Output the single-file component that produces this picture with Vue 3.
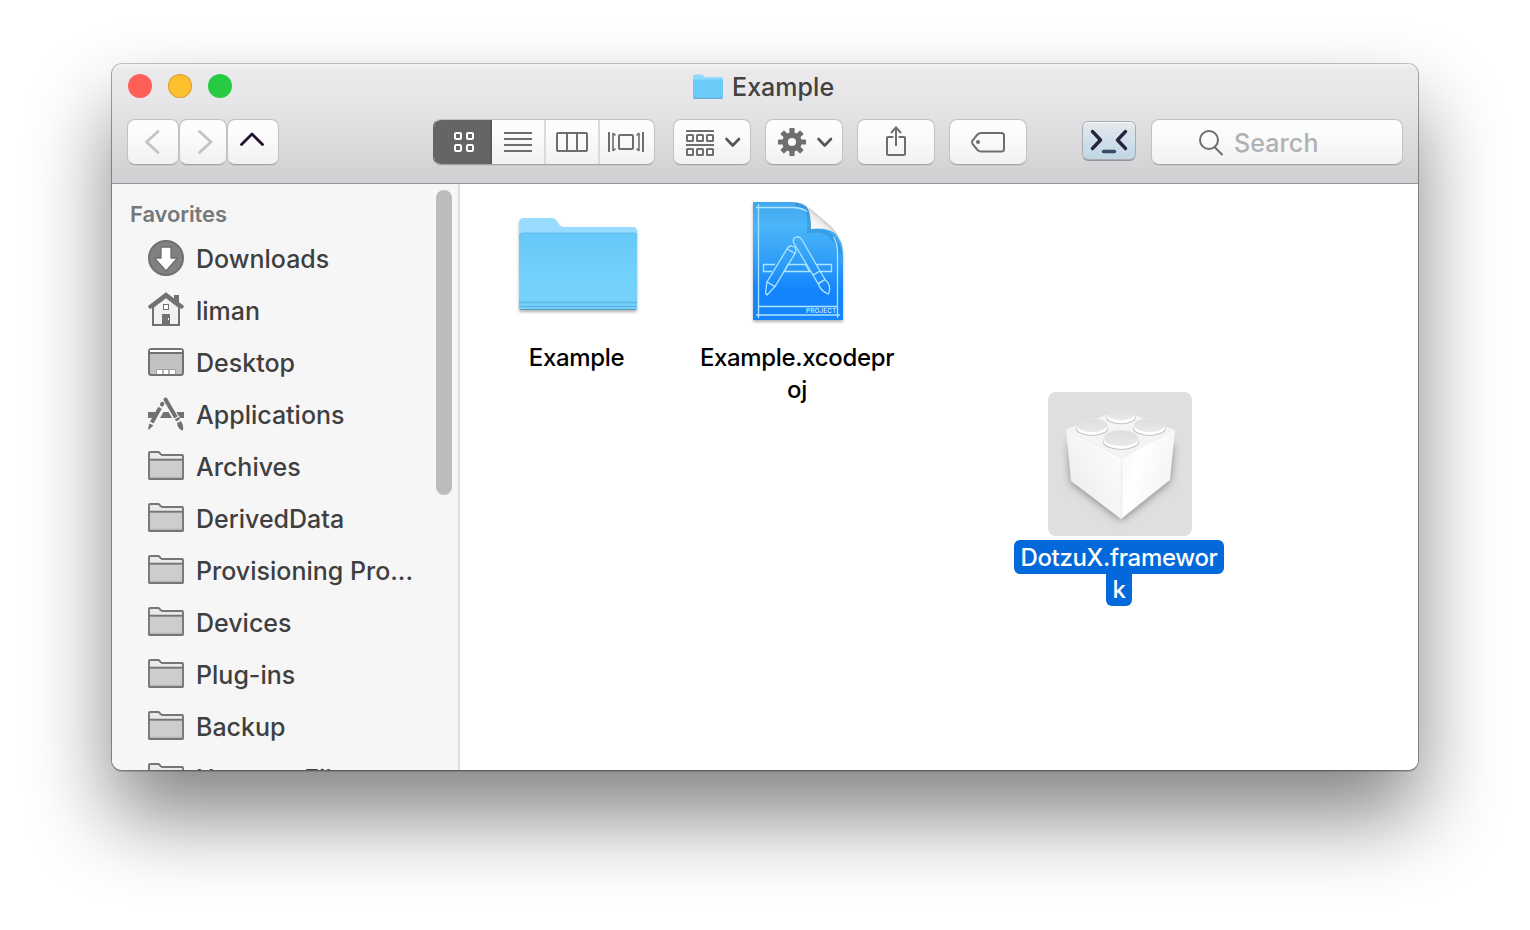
<script setup>
const favorites = [
  { name: 'Downloads', icon: 'downloads' },
  { name: 'liman', icon: 'home' },
  { name: 'Desktop', icon: 'desktop' },
  { name: 'Applications', icon: 'apps' },
  { name: 'Archives', icon: 'folder' },
  { name: 'DerivedData', icon: 'folder' },
  { name: 'Provisioning Pro...', icon: 'folder' },
  { name: 'Devices', icon: 'folder' },
  { name: 'Plug-ins', icon: 'folder' },
  { name: 'Backup', icon: 'folder' },
  { name: 'Hammer Files', icon: 'folder' },
]
const teeth = [0, 45, 90, 135, 180, 225, 270, 315]
const studs = [
  { x: 73, y: 22, rx: 14, ry: 6 },
  { x: 44, y: 33, rx: 15.5, ry: 6.7 },
  { x: 101.5, y: 33, rx: 15.5, ry: 6.7 },
  { x: 73, y: 46, rx: 17.5, ry: 7.7 },
]
</script>

<template>
  <main class="stage">
    <section class="window">
      <header class="chrome">
        <div class="titlebar">
          <div class="lights"><i class="light red"></i><i class="light yellow"></i><i class="light green"></i></div>
          <div class="title">
            <svg width="32" height="28" viewBox="0 0 32 28">
              <path d="M1 4.500q0-2 2-2h6q1.500 0 2.500 1.200l1 1.300h16.500q2 0 2 2v4H1z" fill="#90d8fc" />
              <path d="M1 9q0-1.500 1.500-1.500h27Q31 7.500 31 9v16q0 1.500-1.500 1.500h-27Q1 26.500 1 25z" fill="#6dcbfa" />
              <path d="M1.500 26.300h29" stroke="#539fca" />
            </svg>
            <span>Example</span>
          </div>
        </div>
        <div class="toolbar">
          <div class="nav">
            <div class="btn back"><svg width="50" height="44" viewBox="0 0 50 44"><path d="M30 11.500 18.500 22 30 32.500" fill="none" stroke="#c3c3c3" stroke-width="2.800" stroke-linecap="round" stroke-linejoin="round" /></svg></div>
            <div class="btn forward"><svg width="46" height="44" viewBox="0 0 46 44"><path d="M19.500 11.500 31 22 19.500 32.500" fill="none" stroke="#c3c3c3" stroke-width="2.800" stroke-linecap="round" stroke-linejoin="round" /></svg></div>
            <div class="btn up"><svg width="50" height="44" viewBox="0 0 50 44"><path d="M13.500 24.500 24 14l10.500 10.500" fill="none" stroke="#21112e" stroke-width="2.800" stroke-linecap="round" stroke-linejoin="round" /></svg></div>
          </div>
          <div class="views">
            <div class="view active">
              <svg width="22" height="22" viewBox="0 0 22 22" fill="none" stroke="#fff" stroke-width="2"><rect x="2" y="2" width="6" height="6" rx="1.200" /><rect x="14" y="2" width="6" height="6" rx="1.200" /><rect x="2" y="14" width="6" height="6" rx="1.200" /><rect x="14" y="14" width="6" height="6" rx="1.200" /></svg>
            </div>
            <div class="view"><svg width="28" height="20" viewBox="0 0 28 20"><path d="M0 1h28M0 7h28M0 13h28M0 19h28" stroke="#6e6e6e" stroke-width="2" /></svg></div>
            <div class="view"><svg width="32" height="20" viewBox="0 0 32 20" fill="none" stroke="#6e6e6e" stroke-width="2"><rect x="1" y="1" width="30" height="18" rx="1" /><path d="M11 1v18M21 1v18" /></svg></div>
            <div class="view last"><svg width="36" height="20" viewBox="0 0 36 20" fill="none" stroke="#6e6e6e"><path d="M1 0v20M35 0v20" stroke-width="2" /><path d="M5 1v18M31 1v18M5 1l2.500 2.500M5 19l2.500-2.500M31 1l-2.500 2.500M31 19l-2.500-2.500" stroke-width="1.600" /><rect x="11" y="3" width="14" height="14" rx="1" stroke-width="2" /></svg></div>
          </div>
          <div class="actions">
            <div class="btn action">
              <svg width="76" height="44" viewBox="0 0 76 44" fill="none" stroke="#6e6e6e" stroke-width="2">
                <path d="M12 11h28M12 25h28" />
                <rect x="13" y="15" width="6" height="6" rx=".5" /><rect x="23" y="15" width="6" height="6" rx=".5" /><rect x="33" y="15" width="6" height="6" rx=".5" />
                <rect x="13" y="29" width="6" height="6" rx=".5" /><rect x="23" y="29" width="6" height="6" rx=".5" /><rect x="33" y="29" width="6" height="6" rx=".5" />
                <path d="m52.500 19 6.200 6.500L65 19" stroke="#565656" stroke-width="2.600" stroke-linecap="round" stroke-linejoin="round" />
              </svg>
            </div>
            <div class="btn action">
              <svg width="76" height="44" viewBox="0 0 76 44">
                <g transform="translate(26 22)">
                  <rect v-for="angle in teeth" :key="angle" x="-2.600" y="-14" width="5.200" height="8" rx=".7" fill="#6e6e6e" :transform="`rotate(${angle})`" />
                  <circle r="6.900" fill="none" stroke="#6e6e6e" stroke-width="5.800" />
                </g>
                <path d="m52.500 19 6.200 6.500L65 19" fill="none" stroke="#565656" stroke-width="2.600" stroke-linecap="round" stroke-linejoin="round" />
              </svg>
            </div>
            <div class="btn action">
              <svg width="76" height="44" viewBox="0 0 76 44" fill="none" stroke="#6e6e6e" stroke-width="2"><path d="M35.500 17H30q-1 0-1 1v16q0 1 1 1h16q1 0 1-1V18q0-1-1-1h-5.500" /><path d="M38 26V7.500M33 13 38 7.500l5 5.500" /></svg>
            </div>
            <div class="btn action">
              <svg width="76" height="44" viewBox="0 0 76 44"><path d="M31 13h20.500q2.500 0 2.500 2.500v13.500q0 2.500-2.500 2.500H31q-2 0-3.500-1.500l-5-6q-1.200-1.700 0-3.400l5-6.100Q29 13 31 13z" fill="none" stroke="#6e6e6e" stroke-width="2" /><circle cx="28" cy="22" r="2" fill="#6e6e6e" /></svg>
            </div>
          </div>
          <div class="terminal">
            <svg width="52" height="37" viewBox="1 1 52 37" fill="none" stroke-width="3.400" stroke-linecap="round" stroke-linejoin="round"><path d="m10.500 10.500 8 8.500-8 8.500" stroke="#26243f" /><path d="m43.500 10.500-8 8.500 8 8.500" stroke="#26243f" /><path d="M21.500 30.500h11" stroke="#3a486a" /></svg>
          </div>
          <div class="search">
            <svg width="26" height="28" viewBox="0 0 26 28" fill="none" stroke="#6e6e6e" stroke-width="2"><circle cx="11" cy="12" r="9" /><path d="m16.500 19 7.500 7.500" stroke-linecap="round" /></svg>
            <span>Search</span>
          </div>
        </div>
      </header>
      <div class="body">
        <aside class="sidebar">
          <h2>Favorites</h2>
          <ul>
            <li v-for="item in favorites" :key="item.name">
              <svg width="36" height="36" viewBox="0 0 36 36">
                <template v-if="item.icon === 'downloads'">
                  <circle cx="18" cy="18" r="17" fill="#818083" stroke="#707070" stroke-width="2" />
                  <path d="M13 7h10v11h6.500L18 31 6.500 18H13z" fill="#fff" stroke="#6e6e6e" stroke-width="1.300" stroke-linejoin="round" />
                </template>
                <template v-else-if="item.icon === 'home'">
                  <path d="M5 15 18 5l13 10v18H5z" fill="#f1f1f1" stroke="#717171" stroke-width="2" />
                  <path d="M26 3h5v9l-5-4z" fill="#717171" />
                  <path d="M2.500 14.500 18 2.700l15.500 11.800" fill="none" stroke="#717171" stroke-width="4" stroke-linecap="square" />
                  <rect x="15.500" y="12.500" width="5" height="5" fill="#fff" stroke="#717171" />
                  <path d="M14 22h8v11h-8z" fill="#717171" /><path d="M20.500 26v2" stroke="#eee" />
                </template>
                <template v-else-if="item.icon === 'desktop'">
                  <rect x="1" y="5" width="34" height="26" rx="2.500" fill="#c2c2c2" stroke="#717171" stroke-width="2" />
                  <path d="M2 6h32v2H2z" fill="#fff" /><path d="M2 9h32" stroke="#717171" stroke-width="2" />
                  <path d="M8.500 30v-4.500h19V30" fill="#fff" stroke="#a0a0a0" /><path d="M15 26v4M21 26v4" stroke="#a0a0a0" stroke-width="1.500" />
                </template>
                <template v-else-if="item.icon === 'apps'">
                  <path d="M0 16h7.500l-3 6H0zM28.500 16H36v6h-4.500zM15.500 16h5l3.500 6H12z" fill="#717171" />
                  <path d="M17.500 3.500 28 21.500" stroke="#717171" stroke-width="4" stroke-linecap="round" />
                  <path d="M12.500 11 3.800 26.500" stroke="#717171" stroke-width="4" />
                  <path d="M14 8.500l.4-.7" stroke="#717171" stroke-width="4" stroke-linecap="round" />
                  <path d="m1.500 27.500 4 2-5 4.500q-.7-3 1-6.500zM26.500 22.500l3.800-2.200 1.700 3-3.800 2.200zM29 27l3.800-2q3.500 4.500 2 9.500-5-1-5.800-7.500z" fill="#717171" />
                  <path d="m25.800 23.200 5.700-3.300M28 26.800l5.500-3.200M10.300 10.200l5 2.800" stroke="#f6f6f6" stroke-width="1.100" />
                </template>
                <template v-else>
                  <path d="M1 31V5q0-1 1-1h8q1 0 1.600.8l.8 1q.8 1.200 2 1.200H34q1 0 1 1v23q0 1-1 1H2q-1 0-1-1z" fill="#e9e9e9" />
                  <path d="M2 13h32v18H2z" fill="#cdcdcd" /><path d="M2 29.300h32" stroke="#b9b9b9" stroke-width="1.600" />
                  <path d="M1 30.500V5q0-1 1-1h8q1 0 1.600.8l.8 1q.8 1.200 2 1.200H34q1 0 1 1v22.500q0 .5-.5.500h-33q-.5 0-.5-.500zM1 11.800h34" fill="none" stroke="#757575" stroke-width="1.900" />
                </template>
              </svg>
              <span>{{ item.name }}</span>
            </li>
          </ul>
          <div class="scrollbar"></div>
        </aside>
        <div class="canvas">
          <div class="file folder-file">
            <svg width="124" height="104" viewBox="0 0 124 104">
              <defs>
                <linearGradient id="folderFront" x2="0" y2="1"><stop offset="0" stop-color="#66c9f9" /><stop offset=".6" stop-color="#74d1fc" /><stop offset="1" stop-color="#76d2fc" /></linearGradient>
              </defs>
              <path class="shaded" d="M3 9q0-5 5-5h28q2.500 0 4 2l3.500 5q1.500 2 4 2H117q4 0 4 4v77q0 2-2 2H5q-2 0-2-2z" fill="#97dcff" />
              <path d="M3 23q0-4 4-4h110q4 0 4 4v71q0 2-2 2H5q-2 0-2-2z" fill="url(#folderFront)" />
              <path d="M3.500 22.500q0-3.500 3.500-3.500h110q3.500 0 3.500 3.500" fill="none" stroke="#60bfed" />
              <path d="M3 88.500h118M3 92.500h118" stroke="#5fb5e3" stroke-width="1.300" /><path d="M4 95.500h116" stroke="#599dc2" />
            </svg>
            <p>Example</p>
          </div>
          <div class="file project-file">
            <svg width="98" height="126" viewBox="0 0 98 126">
              <defs>
                <linearGradient id="paper" x2="0" y2="1"><stop offset="0" stop-color="#42a7ef" /><stop offset=".2" stop-color="#4bb5f8" /><stop offset=".5" stop-color="#309ef9" /><stop offset=".75" stop-color="#1484fc" /><stop offset="1" stop-color="#1685fb" /></linearGradient>
                <linearGradient id="curl" x1="0" y1="1" x2=".7" y2=".2"><stop offset="0" stop-color="#fff" /><stop offset=".5" stop-color="#f5f5f5" /><stop offset="1" stop-color="#c6c6ca" /></linearGradient>
              </defs>
              <path class="shaded" d="M4 2h38q12 0 18 7l26 24q8 8 8 22v65H4z" fill="url(#paper)" />
              <path d="M46 4q12 2 14 12 1 5 0 15 16-2 23 6 7 7 8 17" fill="none" stroke="#1c6fae" stroke-width="4" opacity=".28" />
              <path d="M58 7q4 6 4 22 15-2 24 4 2 2 3 4-2-7-9-13L62 9q-2-2-4-2z" fill="url(#curl)" />
              <path d="m60 9 22 19q6 5 7 9" fill="none" stroke="#c3c5c9" />
              <g fill="none" stroke="#ace5ff" stroke-width="1.300">
                <path d="M9.500 4v114M7 7.500h35q11 0 16 4M88.500 118V52q0-8-4-15M7 115h84M9.500 106.500h79" />
                <path d="M26 64.500H14.500v7H23M35 71.500h25.500L56.500 64.500H39zM68 64.500h14.500v7H71.500" />
                <path d="M44.500 42.500q-1-4 2.500-5.500 3.500-1 5.500 2L71 71l-7 4zM64 75l7-4 5 8.500-7 4zM69.500 84l6.500-4.500q7 6 3.500 14.500-8-3-10-10z" />
                <path d="m38 49 8 4.500-20 33-8-4.500zM38 49q2.500-4.500 6.500-2.500t1.500 7M18 82l8 4.500-8 8.500-1.500-2z" />
              </g>
              <text x="87.500" y="113.200" text-anchor="end" font-size="6.300" font-weight="500" letter-spacing=".2" fill="#d5f2ff">PROJECT</text>
            </svg>
            <p>Example.xcodepr<br>oj</p>
          </div>
          <div class="file framework-file">
            <div class="selected-icon">
              <svg width="144" height="144" viewBox="0 0 144 144">
                <defs>
                  <linearGradient id="leftFace" x1="0" y1="1" x2="1" y2="0"><stop offset="0" stop-color="#e6e6e8" /><stop offset=".5" stop-color="#f5f5f6" /><stop offset="1" stop-color="#fefefe" /></linearGradient>
                  <linearGradient id="rightFace" x2="1" y2=".5"><stop offset="0" stop-color="#f5f5f5" /><stop offset=".4" stop-color="#fff" /><stop offset="1" stop-color="#f3f3f3" /></linearGradient>
                  <linearGradient id="stud" x2="0" y2="1"><stop offset="0" stop-color="#dedee0" /><stop offset="1" stop-color="#e8e8ea" /></linearGradient>
                </defs>
                <path class="brick-shadow" d="m22 50 51 16 51-16-3 38-48 38-49-37z" fill="#ddd" />
                <path d="m18 37 55-19 54 20-54 28z" fill="#f4f4f5" />
                <path d="m18 37 55 29v61L23 89z" fill="url(#leftFace)" />
                <path d="m127 38-54 28v61l49-39z" fill="url(#rightFace)" />
                <path d="M73.500 67v58" stroke="#ededed" stroke-width="1.500" />
                <g v-for="stud in studs" :key="stud.x + '-' + stud.y">
                  <ellipse :cx="stud.x" :cy="stud.y + 3.700" :rx="stud.rx + .7" :ry="stud.ry + .5" fill="#c3c3c6" />
                  <ellipse :cx="stud.x" :cy="stud.y + 2.700" :rx="stud.rx" :ry="stud.ry + .5" fill="#fff" />
                  <ellipse :cx="stud.x" :cy="stud.y" :rx="stud.rx - .3" :ry="stud.ry" fill="url(#stud)" stroke="#e6e6e8" stroke-width=".7" />
                </g>
              </svg>
            </div>
            <div class="selected-name"><span class="line">DotzuX.framewor</span><span class="line tail">k</span></div>
          </div>
        </div>
      </div>
    </section>
  </main>
</template>

<style>
html, body { margin: 0; background: #fff; overflow: hidden; }
</style>
<style scoped>
* { box-sizing: border-box; }
.stage { width: 1530px; height: 930px; padding: 64px 112px; background: #fff; font-family: Inter, "Noto Sans", sans-serif; overflow: hidden; }
.window { width: 1306px; height: 706px; border-radius: 10px; box-shadow: 0 0 0 1px rgba(0,0,0,.22), 0 1px 0 1px rgba(0,0,0,.16), 0 46px 84px rgba(0,0,0,.49); background: #fff; }
.chrome { height: 120px; border-radius: 10px 10px 0 0; border-bottom: 1px solid #969498; background: linear-gradient(#f4f4f4 0, #ebe9ec 5px, #e6e5e7 40px, #d1cfd2 118px); }
.titlebar { height: 55px; display: grid; grid-template-columns: 581px 1fr; align-items: start; }
.lights { display: flex; gap: 16px; padding: 10px 16px; }
.light { width: 24px; height: 24px; border-radius: 50%; }
.red { background: #fd5e55; }
.yellow { background: #febf2d; box-shadow: inset 0 0 0 1px #d8a144; }
.green { background: #27cb41; }
.title { display: flex; gap: 8px; padding-top: 8px; color: #424242; font-size: 25px; line-height: 31px; font-weight: 450; letter-spacing: .05px; }
.title svg { margin-left: -1px; }
.toolbar { display: flex; padding-left: 15px; height: 47px; }
.btn, .search, .views { height: 46px; border: 1px solid #c2c1c3; border-bottom-color: #a3a2a4; border-radius: 8px; background: linear-gradient(#fcfefe 0, #fafafa 45%, #f1f1ef 100%); box-shadow: 0 1px 0 rgba(0,0,0,.06); }
.btn { display: flex; }
.nav { display: flex; width: 306px; }
.back { width: 52px; }
.forward { width: 48px; }
.up { width: 52px; }
.btn svg { flex: none; }
.views { width: 222px; display: flex; overflow: hidden; margin-right: 18px; border-left-color: #656565; }
.view { width: 54px; display: flex; align-items: center; justify-content: center; border-right: 2px solid #dadada; }
.active { width: 59px; margin: -1px 0 -1px -1px; padding-left: 5px; background: #656565; border-right-color: #595959; }
.last { border: 0; width: 52px; }
.actions { display: flex; gap: 14px; width: 410px; }
.action { width: 78px; }
.terminal { width: 52px; height: 37px; margin: 3px 16px 0 0; border-radius: 5px; background: repeating-linear-gradient(135deg, rgba(255,255,255,.18) 0 1px, transparent 1px 3px), linear-gradient(#e7e6ec, #cbdde9 55%, #bdd3e2); box-shadow: 0 0 0 1px #a8abb0, 0 2px 0 #8f969d, inset 0 1px #f5f5f9; }
.search { width: 252px; display: flex; align-items: center; padding-left: 46px; color: #afb1b5; font-size: 25px; letter-spacing: .1px; font-weight: 450; }
.search span { margin: 2px 0 0 10px; }
.body { height: 586px; display: flex; }
.sidebar { position: relative; width: 348px; background: #f6f6f6; border-right: 2px solid #dfdfdf; border-radius: 0 0 0 10px; overflow: hidden; }
h2 { margin: 17px 0 5px 18px; color: #77787a; font-size: 22px; line-height: 27px; font-weight: 600; letter-spacing: -.13px; }
ul { list-style: none; padding: 0 0 0 36px; margin: 0; }
li { height: 52px; padding-bottom: 2px; display: flex; align-items: center; gap: 12px; color: #3f3f41; font-size: 25px; font-weight: 450; white-space: nowrap; letter-spacing: 0; }
li span { padding-top: 2px; }
.scrollbar { position: absolute; width: 16px; height: 305px; right: 6px; top: 6px; border-radius: 8px; background: #bcbcbc; }
.canvas { flex: 1; position: relative; border-radius: 0 0 10px; background: #fff; }
.file { position: absolute; display: flex; flex-direction: column; align-items: center; color: #000; font-size: 24px; line-height: 32px; text-align: center; font-weight: 450; letter-spacing: -.34px; }
.file p { margin: 0; }
.file svg { display: block; overflow: visible; }
.folder-file { left: 56px; top: 30px; width: 124px; }
.folder-file p { margin: 24px 3px 0 0; }
.project-file { left: 230px; top: 16px; width: 214px; }
.project-file svg { margin-left: 2px; }
.project-file p { margin-top: 16px; }
.framework-file { left: 554px; top: 208px; width: 210px; }
.shaded { filter: drop-shadow(0 2px 1.500px rgba(0,0,0,.3)); }
.selected-icon { width: 144px; height: 144px; border-radius: 8px; background: #dfdfdf; margin-left: 2px; }
.brick-shadow { filter: drop-shadow(0 1px 5px rgba(0,0,0,.5)); }
.selected-name { margin-top: 4px; display: flex; flex-direction: column; align-items: center; color: #fff; }
.line { width: 210px; height: 34px; line-height: 35px; border-radius: 6px; background: #0369da; }
.tail { width: 26px; line-height: 31px; height: 32px; border-radius: 0 0 6px 6px; }
</style>
